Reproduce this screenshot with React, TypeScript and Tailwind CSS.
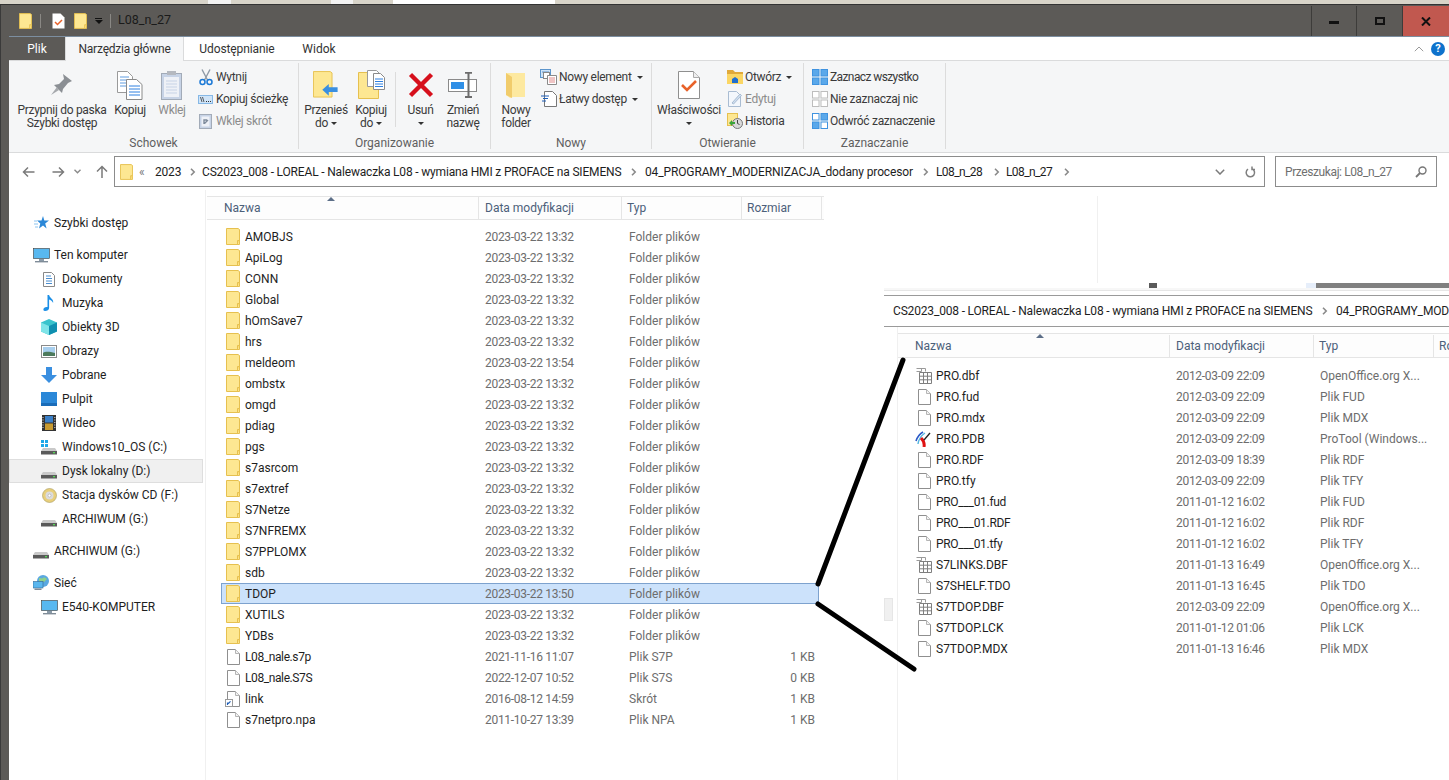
import type { ReactNode } from "react";

const folders: [string, string][] = [
  ["AMOBJS", "2023-03-22 13:32"],
  ["ApiLog", "2023-03-22 13:32"],
  ["CONN", "2023-03-22 13:32"],
  ["Global", "2023-03-22 13:32"],
  ["hOmSave7", "2023-03-22 13:32"],
  ["hrs", "2023-03-22 13:32"],
  ["meldeom", "2023-03-22 13:54"],
  ["ombstx", "2023-03-22 13:32"],
  ["omgd", "2023-03-22 13:32"],
  ["pdiag", "2023-03-22 13:32"],
  ["pgs", "2023-03-22 13:32"],
  ["s7asrcom", "2023-03-22 13:32"],
  ["s7extref", "2023-03-22 13:32"],
  ["S7Netze", "2023-03-22 13:32"],
  ["S7NFREMX", "2023-03-22 13:32"],
  ["S7PPLOMX", "2023-03-22 13:32"],
  ["sdb", "2023-03-22 13:32"],
  ["TDOP", "2023-03-22 13:50"],
  ["XUTILS", "2023-03-22 13:32"],
  ["YDBs", "2023-03-22 13:32"],
];

const files = [
  { name: "L08_nale.s7p", date: "2021-11-16 11:07", type: "Plik S7P", size: "1 KB", icon: "file" },
  { name: "L08_nale.S7S", date: "2022-12-07 10:52", type: "Plik S7S", size: "0 KB", icon: "file" },
  { name: "link", date: "2016-08-12 14:59", type: "Skrót", size: "1 KB", icon: "link" },
  { name: "s7netpro.npa", date: "2011-10-27 13:39", type: "Plik NPA", size: "1 KB", icon: "file" },
];

const tdopFiles = [
  { name: "PRO.dbf", date: "2012-03-09 22:09", type: "OpenOffice.org X...", icon: "table" },
  { name: "PRO.fud", date: "2012-03-09 22:09", type: "Plik FUD", icon: "file" },
  { name: "PRO.mdx", date: "2012-03-09 22:09", type: "Plik MDX", icon: "file" },
  { name: "PRO.PDB", date: "2012-03-09 22:09", type: "ProTool (Windows...", icon: "protool" },
  { name: "PRO.RDF", date: "2012-03-09 18:39", type: "Plik RDF", icon: "file" },
  { name: "PRO.tfy", date: "2012-03-09 22:09", type: "Plik TFY", icon: "file" },
  { name: "PRO___01.fud", date: "2011-01-12 16:02", type: "Plik FUD", icon: "file" },
  { name: "PRO___01.RDF", date: "2011-01-12 16:02", type: "Plik RDF", icon: "file" },
  { name: "PRO___01.tfy", date: "2011-01-12 16:02", type: "Plik TFY", icon: "file" },
  { name: "S7LINKS.DBF", date: "2011-01-13 16:49", type: "OpenOffice.org X...", icon: "table" },
  { name: "S7SHELF.TDO", date: "2011-01-13 16:45", type: "Plik TDO", icon: "file" },
  { name: "S7TDOP.DBF", date: "2012-03-09 22:09", type: "OpenOffice.org X...", icon: "table" },
  { name: "S7TDOP.LCK", date: "2011-01-12 01:06", type: "Plik LCK", icon: "file" },
  { name: "S7TDOP.MDX", date: "2011-01-13 16:46", type: "Plik MDX", icon: "file" },
];

const FolderIcon = ({ w = 14, h = 17 }: { w?: number; h?: number }) => (
  <svg width={w} height={h} viewBox="0 0 14 17" className="shrink-0">
    <path d="M.5.5h11.500l1.500 1v15H.5z" fill="#fde792" stroke="#e6c04f" />
    <path d="M11.500 16.500v-4h2" fill="#fbd971" stroke="#e6c04f" />
  </svg>
);

const FileIcon = () => (
  <svg width="13" height="16" viewBox="0 0 13 16" className="shrink-0">
    <path d="M.5.5h8l4 4v11H.5z" fill="#fff" stroke="#8f8f8f" />
    <path d="M8.500.5v4h4" fill="#f2f2f2" stroke="#b5b5b5" />
  </svg>
);

const TableIcon = () => (
  <svg width="16" height="16" viewBox="0 0 16 16" className="shrink-0 -ml-[2px]">
    <path d="M.5.5h9M.5 3.500h5" stroke="#9a9a9a" fill="none" />
    <path d="M3.500 4.500h12v11h-12zM3.500 8.200h12M3.500 11.800h12M7.500 4.500v11M11.500 4.500v11" stroke="#7f7f7f" fill="#fff" />
    <path d="M5.500.5v3M9.500.5v3" stroke="#9a9a9a" />
  </svg>
);

const ProToolIcon = () => (
  <svg width="16" height="16" viewBox="0 0 16 16" className="shrink-0 -ml-[3px]">
    <path d="M1 10 Q3 4 8 1" stroke="#2b59c8" strokeWidth="1.600" fill="none" />
    <path d="M3 13 Q4 6 10 2" stroke="#54b6e0" strokeWidth="1.400" fill="none" />
    <path d="M6 7 Q10 11 9 16" stroke="#e01212" strokeWidth="3" fill="none" />
    <path d="M9 9 L15 2" stroke="#222" strokeWidth="1.300" fill="none" />
  </svg>
);

const LinkIcon = () => (
  <span className="relative shrink-0 flex">
    <FileIcon />
    <svg width="8" height="8" viewBox="0 0 8 8" className="absolute -left-[2px] bottom-0">
      <rect x=".5" y=".5" width="7" height="7" fill="#fff" stroke="#9a9a9a" />
      <path d="M2.500 6V4h2M3.200 4.700 5.500 2.400" stroke="#1f5fb8" strokeWidth="1.200" fill="none" />
    </svg>
  </span>
);

const fileGlyph = (icon: string) =>
  icon === "table" ? <TableIcon /> : icon === "protool" ? <ProToolIcon /> : icon === "link" ? <LinkIcon /> : <FileIcon />;

const Caret = () => <span className="inline-block w-0 h-0 border-x-[3px] border-x-transparent border-t-[3px] border-t-[#333]" />;

const Chevron = () => (
  <svg width="6" height="8" viewBox="0 0 6 8" className="shrink-0">
    <path d="M1 .8 4.200 4 1 7.200" stroke="#8a8a8a" strokeWidth="1.600" fill="none" />
  </svg>
);

const PinIcon = () => (
  <svg width="24" height="24" viewBox="0 0 24 24">
    <path d="M13 1l9 7-4 2-5 6-1 4-8-8 5-1 5-5z" fill="#8b8f94" />
    <path d="M7 14 1 22l8-5z" fill="#a6a9ad" />
  </svg>
);

const CopyIcon = () => (
  <svg width="26" height="29" viewBox="0 0 26 29">
    <path d="M.5.5h10l5 5v16H.5z" fill="#fff" stroke="#9a9a9a" />
    <path d="M3 6h9M3 9h10M3 12h10M3 15h10" stroke="#5f9ce0" />
    <path d="M9.500 8.500h10l5.500 5v15H9.500z" fill="#fff" stroke="#8a8a8a" />
    <path d="M12 15h11M12 18h11M12 21h11M12 24h11" stroke="#2f80e0" />
  </svg>
);

const ClipboardIcon = () => (
  <svg width="22" height="30" viewBox="0 0 22 30">
    <rect x=".5" y="3.500" width="20" height="26" fill="#c7d3e6" stroke="#a2abb8" />
    <rect x="3" y="7" width="15" height="20" fill="#eef1f7" />
    <path d="M5 11h11M5 14h11M5 17h11M5 20h11M5 23h11" stroke="#c7d3e6" />
    <rect x="6" y="1" width="9" height="4" fill="#b5b9c0" />
  </svg>
);

const ScissorsIcon = () => (
  <svg width="14" height="17" viewBox="0 0 14 17">
    <path d="M3 .5 8.500 11M11 .5 5.500 11" stroke="#8e99a6" strokeWidth="1.400" fill="none" />
    <circle cx="3.500" cy="13" r="2.500" fill="none" stroke="#1b79d6" strokeWidth="1.500" />
    <circle cx="10.500" cy="13" r="2.500" fill="none" stroke="#1b79d6" strokeWidth="1.500" />
  </svg>
);

const PathIcon = () => (
  <svg width="15" height="9" viewBox="0 0 15 9">
    <rect x=".5" y=".5" width="14" height="8" fill="#cfe4f8" stroke="#86b8e6" />
    <path d="M2.500 2 4 7M4.500 2 6 7" stroke="#333" strokeWidth=".8" />
    <path d="M8 6.500h1M10 6.500h1M12 6.500h1" stroke="#333" />
  </svg>
);

const ShortcutIcon = () => (
  <svg width="13" height="16" viewBox="0 0 13 16">
    <rect x=".5" y="1.500" width="12" height="14" fill="#c7d3e6" stroke="#a2abb8" />
    <rect x="2.500" y="3.500" width="8" height="10" fill="#eef1f7" />
    <path d="M5 11V7h3M5.500 10.500 9 7" stroke="#7f8c9c" strokeWidth="1.400" fill="none" />
  </svg>
);

const MoveIcon = () => (
  <svg width="26" height="28" viewBox="0 0 28 30">
    <path d="M.5.5h18l2 1.500v26H.5z" fill="#fde792" stroke="#e6c04f" />
    <path d="M10 20 17 14v3.500h9.500v5H17v4z" fill="#3a8fe0" />
  </svg>
);

const CopyToIcon = () => (
  <svg width="27" height="30" viewBox="0 0 27 30">
    <path d="M.5 2.500h20v26H.5z" fill="#fde792" stroke="#e6c04f" />
    <path d="M9.500.5h9l4 4v12h-13z" fill="#fff" stroke="#9a9a9a" />
    <path d="M15.500 3.500h7l4 4v12h-11z" fill="#fff" stroke="#8a8a8a" />
    <path d="M17 9h8M17 11.500h8M17 14h8M17 16.500h8" stroke="#2f80e0" />
  </svg>
);

const DeleteIcon = () => (
  <svg width="26" height="26" viewBox="0 0 26 26">
    <path d="M2.500 2.500 23.500 23.500M23.500 2.500 2.500 23.500" stroke="#d6101c" strokeWidth="4.400" />
  </svg>
);

const RenameIcon = () => (
  <svg width="30" height="26" viewBox="0 0 30 26">
    <rect x=".5" y="7.500" width="28" height="12" fill="#fff" stroke="#8a8a8a" />
    <rect x="3" y="10" width="13" height="7" fill="#2f8fe6" />
    <path d="M17 .8h7M17 25h7M20.500 1v24" stroke="#6c6c6c" strokeWidth="2" fill="none" />
  </svg>
);

const NewFolderIcon = () => (
  <svg width="21" height="28" viewBox="0 0 21 28">
    <path d="M0 2h19v24H7l-3 1-4-3z" fill="#fde9a0" />
    <path d="M0 2v22l6 3V6z" fill="#f1cc6c" />
  </svg>
);

const NewItemIcon = () => (
  <svg width="17" height="16" viewBox="0 0 17 16">
    <rect x=".5" y=".5" width="10" height="8" fill="#cfe4f8" stroke="#5c95cc" />
    <path d="M2 3h7" stroke="#5c95cc" />
    <rect x="3.500" y="3.500" width="6" height="6" fill="#fff" stroke="#888" />
    <path d="M7.500 6.500h9v9h-9z" fill="#fff" stroke="#8a8a8a" />
    <path d="M9 9h6M9 11h6M9 13h6" stroke="#e08a8a" />
  </svg>
);

const EasyIcon = () => (
  <svg width="16" height="16" viewBox="0 0 16 16">
    <path d="M3.500.5h8l4 4v11h-12z" fill="#fff" stroke="#777" />
    <path d="M0 5h8M2 7.500h5M1 10h4" stroke="#1f5fb8" />
  </svg>
);

const PropsIcon = () => (
  <svg width="22" height="28" viewBox="0 0 22 28">
    <path d="M.5.5h15l6 6v21H.5z" fill="#fff" stroke="#8f8f8f" />
    <path d="M15.500.5v6h6" fill="#eee" stroke="#aaa" />
    <path d="M4 14l5 5 9-9" stroke="#e8622a" strokeWidth="2.600" fill="none" />
  </svg>
);

const OpenIcon = () => (
  <svg width="16" height="14" viewBox="0 0 16 14">
    <path d="M0 0h6l2 2h8v3H0z" fill="#e0a93a" />
    <path d="M0 4h16v10H0z" fill="#fbd664" />
    <path d="M5 13V9l3-2 3 2v4z" fill="#1f6fd0" />
  </svg>
);

const EditIcon = () => (
  <svg width="14" height="16" viewBox="0 0 14 16">
    <path d="M.5.5h8l4 4v11H.5z" fill="#f3f7fc" stroke="#a9bcd2" />
    <path d="M4 12 12 3l1.500 1.500L5.500 13z" fill="#cfdff0" stroke="#a9bcd2" />
  </svg>
);

const HistoryIcon = () => (
  <svg width="16" height="16" viewBox="0 0 16 16">
    <rect x=".5" y=".5" width="10" height="12" fill="#fde792" stroke="#e6c04f" />
    <circle cx="10.500" cy="10.500" r="5" fill="#d9d9d9" stroke="#777" />
    <path d="M10.500 7v3.500l2 1" stroke="#444" fill="none" />
    <path d="M2 10l3-3v2h3v2H5v2z" fill="#3aa53a" />
  </svg>
);

const GridIcon = ({ mode }: { mode: "all" | "none" | "invert" }) => {
  const on = (i: number) => (mode === "all" ? true : mode === "none" ? false : i === 1 || i === 2);
  const stroke = mode === "none" ? "#bdbdbd" : "#3f93e0";
  return (
    <svg width="16" height="16" viewBox="0 0 16 16">
      {[0, 1, 2, 3].map((i) => (
        <rect
          key={i}
          x={i % 2 === 0 ? 0.5 : 9}
          y={i < 2 ? 0.5 : 9}
          width="6.500"
          height="6.500"
          fill={on(i) ? "#5aa8ea" : "#fff"}
          stroke={on(i) ? "#3f93e0" : stroke}
        />
      ))}
    </svg>
  );
};

const SmallBtn = ({ icon, label, dim, caret }: { icon: ReactNode; label: ReactNode; dim?: boolean; caret?: boolean }) => (
  <div className={`h-[22px] flex items-center whitespace-nowrap ${dim ? "text-[#8c8c8c]" : "text-[#3a3a3a]"}`}>
    <span className="w-[19px] flex justify-center items-center shrink-0 -ml-[1px] mr-[1px]">{icon}</span>
    <span>{label}</span>
    {caret && (
      <span className="ml-[5px] flex">
        <Caret />
      </span>
    )}
  </div>
);

const BigBtn = ({
  icon,
  lines,
  w,
  dim,
  ml = "",
}: {
  icon: ReactNode;
  lines: ReactNode[];
  w: string;
  dim?: boolean;
  ml?: string;
}) => (
  <div className={`${w} ${ml} shrink-0 flex flex-col items-center ${dim ? "text-[#8c8c8c]" : "text-[#3a3a3a]"}`}>
    <div className="h-[32px] flex items-center justify-center">{icon}</div>
    <div className="mt-[3px] text-center leading-[13px] whitespace-nowrap">
      {lines.map((l, i) => (
        <div key={i} className="h-[13px] flex items-center justify-center">
          {l}
        </div>
      ))}
    </div>
  </div>
);

const Group = ({ title, w, children }: { title: string; w: string; children: ReactNode }) => (
  <div className={`${w} shrink-0 h-[86px] mt-[2px] border-r border-[#dcdcdc] flex flex-col`}>
    <div className="h-[71px] flex pt-[6px] tracking-[-0.3px]">{children}</div>
    <div className="h-[15px] pt-[2px] flex items-center justify-center text-[#5f5f5f]">{title}</div>
  </div>
);

const NavRow = ({
  icon,
  label,
  child,
  selected,
}: {
  icon: ReactNode;
  label: string;
  child?: boolean;
  selected?: boolean;
}) => (
  <div
    className={`h-[24px] flex items-center whitespace-nowrap text-[#1e1e1e] ${child ? "pl-[30px]" : "pl-[22px]"} ${
      selected ? "bg-[#f0f0f0] border border-[#dedede] mr-[2px]" : ""
    }`}
  >
    <span className={`w-[22px] pr-[2px] flex justify-center shrink-0 ${selected ? "-ml-[1px]" : ""}`}>{icon}</span>
    <span className="ml-[1px]">{label}</span>
  </div>
);

const StarIcon = () => (
  <svg width="15" height="14" viewBox="0 0 15 14">
    <path d="M9 0l1.300 4.500H15l-3.800 3 1.400 5L9 9.500l-4 3 1.300-5L3 4.500h4.500z" fill="#2b88d8" />
    <path d="M0 5h3M0 8h4M1 11h3" stroke="#8cc4f0" />
  </svg>
);

const PcIcon = () => (
  <svg width="17" height="15" viewBox="0 0 17 15">
    <rect x=".5" y=".5" width="16" height="10" fill="#58b8f0" stroke="#3a3a3a" strokeWidth=".6" />
    <rect x="6" y="11" width="5" height="2" fill="#8a9aa8" />
    <rect x="2" y="13" width="13" height="1.400" fill="#7f8c98" />
  </svg>
);

const DocsIcon = () => (
  <svg width="12" height="15" viewBox="0 0 12 15">
    <path d="M.5.5h8l3 3v11H.5z" fill="#fff" stroke="#888" />
    <path d="M3 4h5M3 6.500h6M3 9h6M3 11.500h6" stroke="#4b8ed0" />
  </svg>
);

const MusicIcon = () => (
  <svg width="12" height="16" viewBox="0 0 12 16">
    <path d="M4.500 0h1.600c.4 3 5 4 4 8-.7-2-2.500-3-4-3.500V13c0 2-2 3-4 3S0 14 1 13s2.500-1.300 3.500-1z" fill="#1c8fe6" />
  </svg>
);

const Obj3dIcon = () => (
  <svg width="16" height="16" viewBox="0 0 16 16">
    <path d="M8 0l8 3.500v9L8 16l-8-3.500v-9z" fill="#39c3cc" />
    <path d="M8 7l8-3.500v9L8 16z" fill="#0f8fb0" />
    <path d="M8 7 0 3.500v9L8 16z" fill="#7fe4e8" />
  </svg>
);

const PicsIcon = () => (
  <svg width="16" height="13" viewBox="0 0 16 13">
    <rect x=".5" y=".5" width="15" height="12" fill="#fff" stroke="#8a8a8a" />
    <rect x="2" y="2" width="12" height="9" fill="#a8cfee" />
    <path d="M2 8c3-2 7-1 12 0v3H2z" fill="#4c7a5c" />
  </svg>
);

const DownIcon = () => (
  <svg width="16" height="16" viewBox="0 0 16 16">
    <path d="M5 0h6v8h5l-8 8-8-8h5z" fill="#3a8fe0" />
  </svg>
);

const DesktopIcon = () => (
  <svg width="16" height="14" viewBox="0 0 16 14">
    <rect width="16" height="11" fill="#2b88d8" />
    <rect y="11" width="16" height="3" fill="#1a6cb8" />
  </svg>
);

const VideoIcon = () => (
  <svg width="14" height="16" viewBox="0 0 14 16">
    <rect width="14" height="16" fill="#333" />
    <rect x="3" y="1" width="8" height="6.500" fill="#3a7fc8" />
    <rect x="3" y="8.500" width="8" height="6.500" fill="#c89a30" />
    <path d="M1 2v12" stroke="#ddd" strokeDasharray="1 1.500" />
    <path d="M12.800 2v12" stroke="#ddd" strokeDasharray="1 1.500" />
  </svg>
);

const DriveIcon = ({ win }: { win?: boolean }) => (
  <svg width="16" height="15" viewBox="0 0 16 15">
    {win && <path d="M0 0h3v3H0zM4 0h3v3H4zM0 4h3v3H0zM4 4h3v3H4z" fill="#1fa8e8" />}
    <path d="M2 8h12l2 3H0z" fill="#c9c9c9" />
    <rect y="11" width="16" height="3.500" fill="#5a5a5a" />
    <rect x="12" y="12" width="2" height="1.300" fill="#55d855" />
  </svg>
);

const CdIcon = () => (
  <svg width="15" height="15" viewBox="0 0 15 15">
    <circle cx="7.500" cy="7.500" r="7" fill="#e8cf7a" stroke="#a89a60" strokeWidth=".6" />
    <circle cx="7.500" cy="7.500" r="4" fill="#dcdcdc" />
    <circle cx="7.500" cy="7.500" r="1.500" fill="#fff" stroke="#999" strokeWidth=".5" />
  </svg>
);

const NetIcon = () => (
  <svg width="17" height="16" viewBox="0 0 17 16">
    <circle cx="10" cy="6" r="6" fill="#5aa8e0" />
    <path d="M6 3c2 0 3 1 4 0s3 0 4 1l-3 3-3-1-2 1z" fill="#8fd08a" />
    <rect x="0" y="6.500" width="10" height="6.500" fill="#59b6ee" stroke="#35658e" strokeWidth=".6" />
    <rect x="1.500" y="13.500" width="7" height="1.500" fill="#7f8c98" />
  </svg>
);

const ColHeader = ({ label, w }: { label: string; w: string }) => (
  <div className={`${w} shrink-0 pl-[5px] flex items-center text-[#4c607a] border-r border-[#e5e5e5] whitespace-nowrap`}>
    {label}
  </div>
);

export default function App() {
  return (
    <div
      className="relative w-[1449px] h-[780px] overflow-hidden bg-white text-[12px] leading-none text-[#1e1e1e] flex flex-col"
      style={{ fontFamily: "Roboto, 'Liberation Sans', sans-serif" }}
    >
      {/* strip of the window behind */}
      <div className="h-[4px] bg-[#d8d4c9] shrink-0 flex">
        <div className="ml-[208px] w-[23px] bg-[#f2f2f2]" />
        <div className="ml-[100px] w-[22px] bg-[#f2f2f2]" />
        <div className="ml-[40px] w-[162px] bg-white" />
      </div>
      <div className="h-px bg-[#333] shrink-0" />

      <div className="flex-1 flex min-h-0">
        <div className="w-[9px] shrink-0 bg-[#5c5a57] border-l border-[#3a3a3a]" />
        <div className="flex-1 min-w-0 flex flex-col">
          {/* title bar */}
          <div className="h-[32px] shrink-0 bg-[#5c5a57] border-b border-[#7c8ea0] flex items-center pl-[10px] text-[#1a1a1a]">
            <FolderIcon w={13} h={16} />
            <span className="ml-[8px] w-px h-[14px] bg-[#8a8884]" />
            <span className="ml-[11px] flex">
              <svg width="13" height="16" viewBox="0 0 13 16">
                <path d="M.5.5h8l4 4v11H.5z" fill="#fff" />
                <path d="M3 9l2.500 2.500L10 7" stroke="#e8622a" strokeWidth="1.500" fill="none" />
              </svg>
            </span>
            <span className="ml-[9px] flex">
              <FolderIcon w={13} h={16} />
            </span>
            <span className="ml-[8px] flex flex-col items-center gap-[1px] w-[7px]">
              <span className="w-[7px] h-px bg-[#111]" />
              <span className="w-0 h-0 border-x-[4px] border-x-transparent border-t-[4px] border-t-[#111]" />
            </span>
            <span className="ml-[8px] w-px h-[14px] bg-[#8a8884]" />
            <span className="ml-[7px] text-[12.5px]">L08_n_27</span>
            <div className="ml-auto flex h-[30px] self-start mt-[1px]">
              <div className="w-[46px] border-x border-[#3d3c3a] flex items-center justify-center">
                <span className="w-[10px] h-[3px] bg-[#111] mt-[3px]" />
              </div>
              <div className="w-[46px] border-r border-[#3d3c3a] flex items-center justify-center">
                <span className="w-[10px] h-[8px] border-2 border-[#111]" />
              </div>
              <div className="w-[46px] bg-[#c1584f] flex items-center justify-center">
                <svg width="10" height="9" viewBox="0 0 10 9">
                  <path d="M1 .5l8 8M9 .5l-8 8" stroke="#111" strokeWidth="2" />
                </svg>
              </div>
            </div>
          </div>

          {/* tabs */}
          <div className="h-[24px] shrink-0 flex items-stretch border-b border-[#dadbdc]">
            <div className="w-[56px] bg-[#5c5a57] text-white flex items-center justify-center">Plik</div>
            <div className="w-[119px] -mb-px bg-[#f5f6f7] border-x border-[#dadbdc] flex items-center justify-center text-[#333] tracking-[-0.2px]">
              Narzędzia główne
            </div>
            <div className="w-[106px] flex items-center justify-center text-[#333] tracking-[-0.1px]">Udostępnianie</div>
            <div className="w-[50px] ml-[3px] flex items-center justify-center text-[#333] pl-[2px]">Widok</div>
            <div className="ml-auto flex items-center pr-[4px] gap-[7px]">
              <svg width="10" height="6" viewBox="0 0 10 6">
                <path d="M.8 5.200 5 1l4.200 4.200" stroke="#9a9a9a" fill="none" />
              </svg>
              <span className="w-[14px] h-[14px] rounded-full bg-[#0e72cc] text-white text-[11px] font-bold flex items-center justify-center">
                ?
              </span>
            </div>
          </div>

          {/* ribbon */}
          <div className="h-[92px] shrink-0 bg-[#f5f6f7] border-b border-[#dadbdc] flex">
            <Group title="Schowek" w="w-[290px]">
              <BigBtn w="w-[92px]" ml="ml-[7px]" icon={<PinIcon />} lines={["Przypnij do paska", "Szybki dostęp"]} />
              <BigBtn w="w-[40px]" ml="ml-[2px]" icon={<CopyIcon />} lines={["Kopiuj"]} />
              <BigBtn w="w-[36px]" ml="ml-[4px]" dim icon={<ClipboardIcon />} lines={["Wklej"]} />
              <div className="ml-[7px] -mt-[3px] flex flex-col">
                <SmallBtn icon={<ScissorsIcon />} label="Wytnij" />
                <SmallBtn icon={<PathIcon />} label="Kopiuj ścieżkę" />
                <SmallBtn dim icon={<ShortcutIcon />} label="Wklej skrót" />
              </div>
            </Group>
            <Group title="Organizowanie" w="w-[192px]">
              <BigBtn
                w="w-[46px]"
                ml="ml-[4px]"
                icon={<MoveIcon />}
                lines={[
                  "Przenieś",
                  <span className="flex items-center gap-[3px]">
                    do <Caret />
                  </span>,
                ]}
              />
              <BigBtn
                w="w-[44px]"
                icon={<CopyToIcon />}
                lines={[
                  "Kopiuj",
                  <span className="flex items-center gap-[3px]">
                    do <Caret />
                  </span>,
                ]}
              />
              <span className="w-px h-[55px] bg-[#dcdcdc] ml-[2px] mt-[3px]" />
              <BigBtn w="w-[49px]" icon={<DeleteIcon />} lines={["Usuń", <Caret />]} />
              <BigBtn w="w-[36px]" icon={<RenameIcon />} lines={["Zmień", "nazwę"]} />
            </Group>
            <Group title="Nowy" w="w-[161px]">
              <BigBtn w="w-[40px]" ml="ml-[5px]" icon={<NewFolderIcon />} lines={["Nowy", "folder"]} />
              <div className="ml-[4px] -mt-[3px] flex flex-col">
                <SmallBtn icon={<NewItemIcon />} label="Nowy element" caret />
                <SmallBtn icon={<EasyIcon />} label="Łatwy dostęp" caret />
              </div>
            </Group>
            <Group title="Otwieranie" w="w-[152px]">
              <BigBtn w="w-[64px]" ml="ml-[5px]" icon={<PropsIcon />} lines={["Właściwości", <Caret />]} />
              <div className="ml-[5px] -mt-[3px] flex flex-col">
                <SmallBtn icon={<OpenIcon />} label="Otwórz" caret />
                <SmallBtn dim icon={<EditIcon />} label="Edytuj" />
                <SmallBtn icon={<HistoryIcon />} label="Historia" />
              </div>
            </Group>
            <Group title="Zaznaczanie" w="w-[142px]">
              <div className="ml-[7px] -mt-[3px] flex flex-col">
                <SmallBtn icon={<GridIcon mode="all" />} label={<span className="tracking-[-0.6px]">Zaznacz wszystko</span>} />
                <SmallBtn icon={<GridIcon mode="none" />} label="Nie zaznaczaj nic" />
                <SmallBtn icon={<GridIcon mode="invert" />} label="Odwróć zaznaczenie" />
              </div>
            </Group>
          </div>

          {/* address row */}
          <div className="h-[37px] shrink-0 flex items-center">
            <svg width="13" height="12" viewBox="0 0 13 12" className="ml-[13px]">
              <path d="M12.500 6H1.500M6 1.500 1.500 6 6 10.500" stroke="#7a7a7a" strokeWidth="1.500" fill="none" />
            </svg>
            <svg width="13" height="12" viewBox="0 0 13 12" className="ml-[17px]">
              <path d="M.5 6h11M7 1.500 11.500 6 7 10.500" stroke="#7a7a7a" strokeWidth="1.500" fill="none" />
            </svg>
            <svg width="7" height="5" viewBox="0 0 7 5" className="ml-[9px]">
              <path d="M.5.8 3.500 3.800 6.500.8" stroke="#8a8a8a" strokeWidth="1.400" fill="none" />
            </svg>
            <svg width="12" height="13" viewBox="0 0 12 13" className="ml-[15px]">
              <path d="M6 13V1.500M1 6.500l5-5 5 5" stroke="#7a7a7a" strokeWidth="1.500" fill="none" />
            </svg>
            <div className="ml-[6px] w-[1151px] h-[31px] border border-[#8c8c8c] flex items-center pl-[5px] text-[#1e1e1e] whitespace-nowrap">
              <FolderIcon w={13} h={16} />
              <span className="ml-[6px] w-[16px] text-[#777]">«</span>
              <span className="w-[35px] tracking-[-0.2px]">2023</span>
              <Chevron />
              <span className="ml-[6px] w-[429px] tracking-[-0.17px]">CS2023_008 - LOREAL - Nalewaczka L08 - wymiana HMI z PROFACE na SIEMENS</span>
              <Chevron />
              <span className="ml-[8px] w-[278px] tracking-[-0.13px]">04_PROGRAMY_MODERNIZACJA_dodany procesor</span>
              <Chevron />
              <span className="ml-[7px] w-[58px] tracking-[-0.6px]">L08_n_28</span>
              <Chevron />
              <span className="ml-[6px] w-[58px] tracking-[-0.6px]">L08_n_27</span>
              <Chevron />
              <svg width="10" height="6" viewBox="0 0 10 6" className="ml-[145px]">
                <path d="M.8.8 5 5 9.200.8" stroke="#7a7a7a" strokeWidth="1.500" fill="none" />
              </svg>
              <svg width="11" height="12" viewBox="0 0 11 12" className="ml-[20px]">
                <path d="M3 3.200a4.200 4.200 0 1 0 4-.4M7 .5v3h3" stroke="#7f7f7f" strokeWidth="1.500" fill="none" />
              </svg>
            </div>
            <div className="ml-[10px] w-[162px] h-[31px] border border-[#8c8c8c] flex items-center pl-[9px] pr-[9px] text-[#6f6f6f] whitespace-nowrap">
              <span className="tracking-[-0.4px]">Przeszukaj: L08_n_27</span>
              <svg width="12" height="12" viewBox="0 0 12 12" className="ml-auto">
                <circle cx="7.500" cy="4.500" r="3.500" fill="none" stroke="#777" strokeWidth="1.400" />
                <path d="M5 7 1 11" stroke="#777" strokeWidth="1.800" />
              </svg>
            </div>
          </div>

          {/* body */}
          <div className="flex-1 min-h-0 flex">
            <div className="w-[197px] shrink-0 border-r border-[#f0f0f0] pt-[21px]">
              <NavRow icon={<StarIcon />} label="Szybki dostęp" />
              <div className="mt-[8px]">
                <NavRow icon={<PcIcon />} label="Ten komputer" />
                <NavRow child icon={<DocsIcon />} label="Dokumenty" />
                <NavRow child icon={<MusicIcon />} label="Muzyka" />
                <NavRow child icon={<Obj3dIcon />} label="Obiekty 3D" />
                <NavRow child icon={<PicsIcon />} label="Obrazy" />
                <NavRow child icon={<DownIcon />} label="Pobrane" />
                <NavRow child icon={<DesktopIcon />} label="Pulpit" />
                <NavRow child icon={<VideoIcon />} label="Wideo" />
                <NavRow child icon={<DriveIcon win />} label="Windows10_OS (C:)" />
                <NavRow child selected icon={<DriveIcon />} label="Dysk lokalny (D:)" />
                <NavRow child icon={<CdIcon />} label="Stacja dysków CD (F:)" />
                <NavRow child icon={<DriveIcon />} label="ARCHIWUM (G:)" />
              </div>
              <div className="mt-[8px]">
                <NavRow icon={<DriveIcon />} label="ARCHIWUM (G:)" />
              </div>
              <div className="mt-[8px]">
                <NavRow icon={<NetIcon />} label="Sieć" />
                <NavRow child icon={<PcIcon />} label="E540-KOMPUTER" />
              </div>
            </div>

            <div className="flex-1 min-w-0 flex items-start pt-[6px]">
              <div className="w-[892px] shrink-0 border-r border-[#f0f0f0] h-[87px] -mb-[87px]" />
              <div className="-ml-[892px] w-[618px] shrink-0">
                <div className="relative h-[24px] ml-px flex border-t border-b border-[#e5e5e5] bg-[#fdfdfd]">
                  <span className="absolute top-0 left-[120px] w-0 h-0 border-x-[4px] border-x-transparent border-b-[4px] border-b-[#5d6f88]" />
                  <ColHeader label="Nazwa" w="w-[272px] pl-[17px]" />
                  <ColHeader label="Data modyfikacji" w="w-[143px] pl-[6px]" />
                  <ColHeader label="Typ" w="w-[120px]" />
                  <ColHeader label="Rozmiar" w="w-[80px]" />
                </div>
                <div className="mt-[6px] ml-[15px] w-[598px]">
                  {folders.map(([name, date]) => (
                    <div
                      key={name}
                      className={`h-[21px] flex items-center whitespace-nowrap border ${
                        name === "TDOP" ? "bg-[#cce2fb] border-[#7da2ce]" : "border-transparent"
                      }`}
                    >
                      <span className="ml-[4px] w-[14px] flex">
                        <FolderIcon />
                      </span>
                      <span className="ml-[5px] w-[240px]">{name}</span>
                      <span className="w-[144px] text-[#6d6d6d] tracking-[-0.3px]">{date}</span>
                      <span className="w-[119px] text-[#6d6d6d]">Folder plików</span>
                    </div>
                  ))}
                  {files.map((f) => (
                    <div key={f.name} className="h-[21px] flex items-center whitespace-nowrap border border-transparent">
                      <span className="ml-[5px] w-[13px] flex">{fileGlyph(f.icon)}</span>
                      <span className={`ml-[5px] w-[240px] ${f.name.startsWith("L08") ? "tracking-[-0.4px]" : ""}`}>{f.name}</span>
                      <span className="w-[144px] text-[#6d6d6d] tracking-[-0.3px]">{f.date}</span>
                      <span className="w-[100px] text-[#6d6d6d]">{f.type}</span>
                      <span className="w-[86px] text-right text-[#6d6d6d]">{f.size}</span>
                    </div>
                  ))}
                </div>
              </div>
            </div>
          </div>
        </div>
      </div>

      {/* pasted crop of the TDOP folder */}
      <div className="absolute left-[1149px] top-[283px] w-[8px] h-[5px] bg-[#5a5a5a]" />
      <div className="absolute left-[1306px] top-[283px] w-[10px] h-[5px] bg-[#e6eefa]" />
      <div className="absolute left-[1316px] top-[283px] w-[133px] h-[5px] bg-[#808080]" />
      <div className="absolute left-[884px] top-[288px] w-[565px] h-[492px] bg-white whitespace-nowrap overflow-hidden">
        <div className="h-[3px] bg-[#f7f7f7] border-b border-[#e6e6e6]" />
        <div className="h-[4px]" />
        <div className="h-[32px] border-y border-[#9a9a9a] flex items-center pl-[9px]">
          <span className="w-[429px] shrink-0 tracking-[-0.17px]">CS2023_008 - LOREAL - Nalewaczka L08 - wymiana HMI z PROFACE na SIEMENS</span>
          <Chevron />
          <span className="ml-[8px] shrink-0 tracking-[-0.13px]">04_PROGRAMY_MODERNIZACJA_dodany procesor</span>
        </div>
        <div className="flex h-[453px]">
          <div className="w-[13px] shrink-0 flex items-start">
            <div className="mt-[271px] w-[9px] h-[23px] bg-[#f0f0f0] border border-[#e6e6e6]" />
          </div>
          <div className="flex-1 border-l border-[#f0f0f0] pt-[6px] min-w-0">
            <div className="relative h-[25px] pt-[1px] flex border-b border-[#e5e5e5] border-t bg-[#fdfdfd]">
              <span className="absolute top-0 left-[138px] w-0 h-0 border-x-[4px] border-x-transparent border-b-[4px] border-b-[#5d6f88]" />
              <ColHeader label="Nazwa" w="w-[272px] pl-[17px]" />
              <ColHeader label="Data modyfikacji" w="w-[144px] pl-[6px]" />
              <ColHeader label="Typ" w="w-[120px]" />
              <ColHeader label="Rozmiar" w="w-[80px]" />
            </div>
            <div className="mt-[7px]">
              {tdopFiles.map((f) => (
                <div key={f.name} className="h-[21px] flex items-center">
                  <span className="ml-[20px] w-[13px] flex">{fileGlyph(f.icon)}</span>
                  <span className={`ml-[5px] w-[240px] ${f.name.includes("___") ? "tracking-[-0.3px]" : ""}`}>{f.name}</span>
                  <span className="w-[144px] text-[#6d6d6d] tracking-[-0.3px]">{f.date}</span>
                  <span className="text-[#6d6d6d]">{f.type}</span>
                </div>
              ))}
            </div>
          </div>
        </div>
      </div>

      {/* hand-drawn connector lines */}
      <svg width="1449" height="780" viewBox="0 0 1449 780" className="absolute inset-0 pointer-events-none">
        <path d="M818 584 903 360M818 604 914 669" stroke="#000" strokeWidth="5" strokeLinecap="round" fill="none" />
      </svg>
    </div>
  );
}
